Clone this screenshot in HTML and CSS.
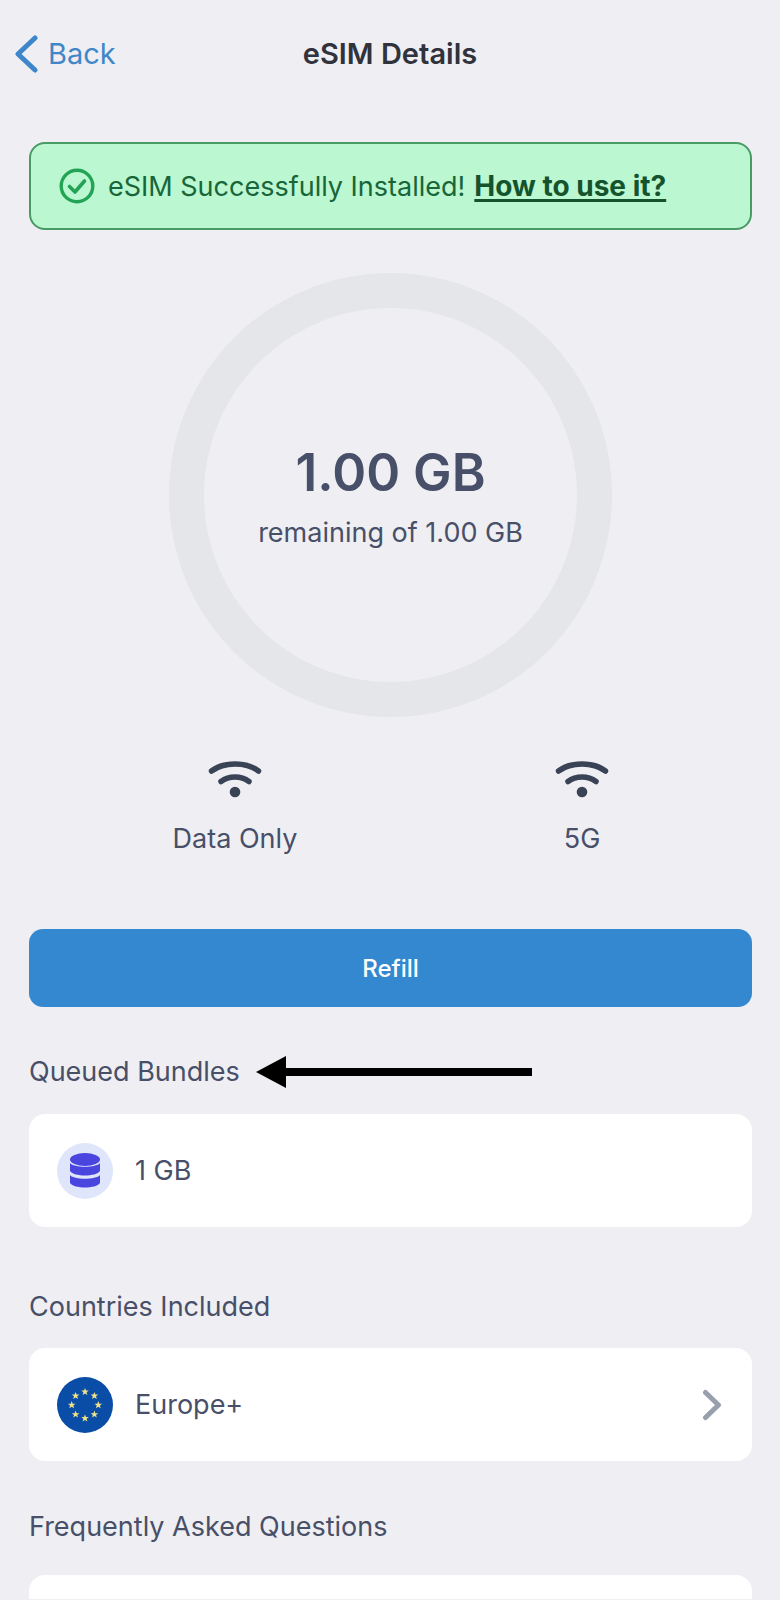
FILE: index.html
```html
<!DOCTYPE html>
<html lang="en">
<head>
  <meta charset="UTF-8" />
  <meta name="viewport" content="width=device-width, initial-scale=1" />
  <title>eSIM Details</title>
  <link rel="stylesheet" href="styles.css">
</head>
<body>

  <header class="topbar">
    <a class="back" href="#">
      <svg class="back-icon" width="24" height="38" viewBox="0 0 24 38" aria-hidden="true">
        <path d="M21 3 L4 19 L21 35" fill="none" stroke="#3d86cb" stroke-width="5" stroke-linecap="round" stroke-linejoin="round"/>
      </svg>
      <span>Back</span>
    </a>
    <h1>eSIM Details</h1>
  </header>

  <main class="content">
    <div class="banner">
      <svg width="36" height="36" viewBox="0 0 36 36" aria-hidden="true">
        <circle cx="18" cy="18" r="15.8" fill="none" stroke="#23a455" stroke-width="3.4"/>
        <path d="M10.5 18.5 L16 24 L25.5 13" fill="none" stroke="#23a455" stroke-width="3.6" stroke-linecap="round" stroke-linejoin="round"/>
      </svg>
      <span>eSIM Successfully Installed!</span>
      <a href="#">How to use it?</a>
    </div>

    <!-- Anillo de datos -->
    <div class="ring">
      <div class="ring-value">1.00 GB</div>
      <div class="ring-label">remaining of 1.00 GB</div>
    </div>

    <div class="features">
      <div class="feature">
        <svg width="54" height="40" viewBox="0 0 54 40" aria-hidden="true">
          <path d="M3.5 12 C16 2.5 38 2.5 50.5 12" fill="none" stroke="#3a4256" stroke-width="5.5" stroke-linecap="round"/>
          <path d="M13 22.5 C21 16.5 33 16.5 41 22.5" fill="none" stroke="#3a4256" stroke-width="5.5" stroke-linecap="round"/>
          <circle cx="27" cy="33" r="5.3" fill="#3a4256"/>
        </svg>
        <span>Data Only</span>
      </div>
      <div class="feature">
        <svg width="54" height="40" viewBox="0 0 54 40" aria-hidden="true">
          <path d="M3.5 12 C16 2.5 38 2.5 50.5 12" fill="none" stroke="#3a4256" stroke-width="5.5" stroke-linecap="round"/>
          <path d="M13 22.5 C21 16.5 33 16.5 41 22.5" fill="none" stroke="#3a4256" stroke-width="5.5" stroke-linecap="round"/>
          <circle cx="27" cy="33" r="5.3" fill="#3a4256"/>
        </svg>
        <span>5G</span>
      </div>
    </div>

    <button class="btn-refill">Refill</button>

    <section class="group group-queued">
      <div class="group-title">
        <h2>Queued Bundles</h2>
        <svg class="arrow" width="276" height="32" viewBox="0 0 276 32" aria-hidden="true">
          <polygon points="0,16 30,0 30,12 276,12 276,20 30,20 30,32" fill="#000"/>
        </svg>
      </div>
      <div class="card">
        <span class="avatar avatar-data">
          <svg width="32" height="36" viewBox="0 0 32 36" aria-hidden="true">
            <ellipse cx="16" cy="6.5" rx="15" ry="6.5" fill="#4b45e0"/>
            <path d="M1 10 C5 15 27 15 31 10 V18 C27 24 5 24 1 18 Z" fill="#4b45e0"/>
            <path d="M1 22 C5 27 27 27 31 22 V30 C27 36 5 36 1 30 Z" fill="#4b45e0"/>
          </svg>
        </span>
        <span class="card-text">1 GB</span>
      </div>
    </section>

    <section class="group group-countries">
      <h2>Countries Included</h2>
      <div class="card">
        <span class="avatar">
          <svg width="56" height="56" viewBox="0 0 56 56" aria-hidden="true">
            <defs>
              <polygon id="star" points="0,-3.9 1,-1.2 3.8,-1.2 1.6,0.5 2.4,3.2 0,1.7 -2.4,3.2 -1.6,0.5 -3.8,-1.2 -1,-1.2"/>
            </defs>
            <circle cx="28" cy="28" r="28" fill="#0a4da6"/>
            <g fill="#efe08a">
              <use href="#star" x="28" y="14.8"/>
              <use href="#star" x="37.4" y="18.8"/>
              <use href="#star" x="41.3" y="28"/>
              <use href="#star" x="37.4" y="37.4"/>
              <use href="#star" x="28" y="41.3"/>
              <use href="#star" x="18.6" y="37.4"/>
              <use href="#star" x="14.7" y="28"/>
              <use href="#star" x="18.6" y="18.8"/>
            </g>
          </svg>
        </span>
        <span class="card-text">Europe+</span>
        <svg class="chevron" width="20" height="32" viewBox="0 0 20 32" aria-hidden="true">
          <path d="M3.5 3.5 L16.5 16 L3.5 28.5" fill="none" stroke="#98a0ae" stroke-width="5" stroke-linecap="round" stroke-linejoin="round"/>
        </svg>
      </div>
    </section>

    <section class="group group-faq">
      <h2>Frequently Asked Questions</h2>
      <div class="card card-faq"></div>
    </section>
  </main>

</body>
</html>
```

FILE: styles.css
```css
:root {
  --bg-color: #eeeef3;
  --text-color: #484f68;
  --title-color: #30323c;
  --primary-color: #3388d0;
  --ring-color: #e4e6ea;
}

html,
body {
  height: 100%;
  overflow: hidden;
}

body {
  margin: 0;
  background: var(--bg-color);
  color: var(--text-color);
  font-family: Inter, "Noto Sans", sans-serif;
}

/* Barra superior */
.topbar {
  position: relative;
  display: flex;
  justify-content: center;
  align-items: center;
  height: 106px;
}

.topbar h1 {
  margin: 0;
  font-size: 29px;
  font-weight: 600;
  color: var(--title-color);
}

.back {
  position: absolute;
  left: 14px;
  top: 33px;
  display: flex;
  align-items: center;
  gap: 10px;
  color: #3f87c7;
  font-size: 29px;
  text-decoration: none;
}

.back-icon {
  margin-top: 2px;
}

.content {
  padding: 36px 28px 0 29px;
}

/* Aviso de instalación */
.banner {
  display: flex;
  align-items: center;
  box-sizing: border-box;
  height: 88px;
  padding: 0 28px;
  background: #bbf7d0;
  border: 2px solid #4a9a66;
  border-radius: 16px;
  color: #17663a;
  font-size: 27px;
}

.banner span {
  margin-left: 13px;
}

.banner a {
  margin-left: 9px;
  color: #14532d;
  font-size: 28px;
  font-weight: 700;
  text-decoration: underline;
  text-decoration-thickness: 3px;
  text-underline-offset: 3px;
}

.ring {
  display: flex;
  flex-direction: column;
  align-items: center;
  justify-content: center;
  box-sizing: border-box;
  width: 443px;
  height: 444px;
  margin: 43px auto 0;
  border: 35px solid var(--ring-color);
  border-radius: 50%;
}

.ring-value {
  font-size: 51.5px;
  font-weight: 600;
  line-height: 62px;
}

.ring-label {
  margin-top: 14px;
  font-size: 27px;
  line-height: 32px;
}

.features {
  display: flex;
  gap: 147px;
  margin-top: 42px;
  padding-left: 106px;
}

.feature {
  display: flex;
  flex-direction: column;
  align-items: center;
  gap: 23px;
  width: 200px;
  font-size: 27px;
  line-height: 34px;
}

.btn-refill {
  display: block;
  width: 100%;
  height: 78px;
  margin-top: 73px;
  padding: 0;
  background: var(--primary-color);
  border: none;
  border-radius: 14px;
  color: white;
  font-family: inherit;
  font-size: 24px;
  font-weight: 500;
}

.group h2 {
  margin: 0;
  font-size: 27px;
  font-weight: 400;
  line-height: 34px;
}

.group-title {
  display: flex;
  align-items: center;
  gap: 16px;
}

.group-queued { margin-top: 48px; }
.group-countries { margin-top: 63px; }
.group-faq { margin-top: 49px; }

.group-title + .card {
  margin-top: 25px;
}

.group-countries .card {
  margin-top: 24px;
}

.group-faq .card {
  margin-top: 31px;
}

.card {
  display: flex;
  align-items: center;
  gap: 22px;
  box-sizing: border-box;
  height: 113px;
  padding: 0 28px;
  background: white;
  border-radius: 16px;
}

/* Solo se ve el borde superior de esta tarjeta */
.card-faq {
  height: 24px;
  border-radius: 16px 16px 0 0;
}

.card-text {
  flex: 1;
  font-size: 27px;
}

.avatar {
  display: flex;
  justify-content: center;
  align-items: center;
  width: 56px;
  height: 56px;
  border-radius: 50%;
}

.avatar-data {
  background: #dfe6fb;
}

.chevron {
  margin-right: 2px;
}
```
